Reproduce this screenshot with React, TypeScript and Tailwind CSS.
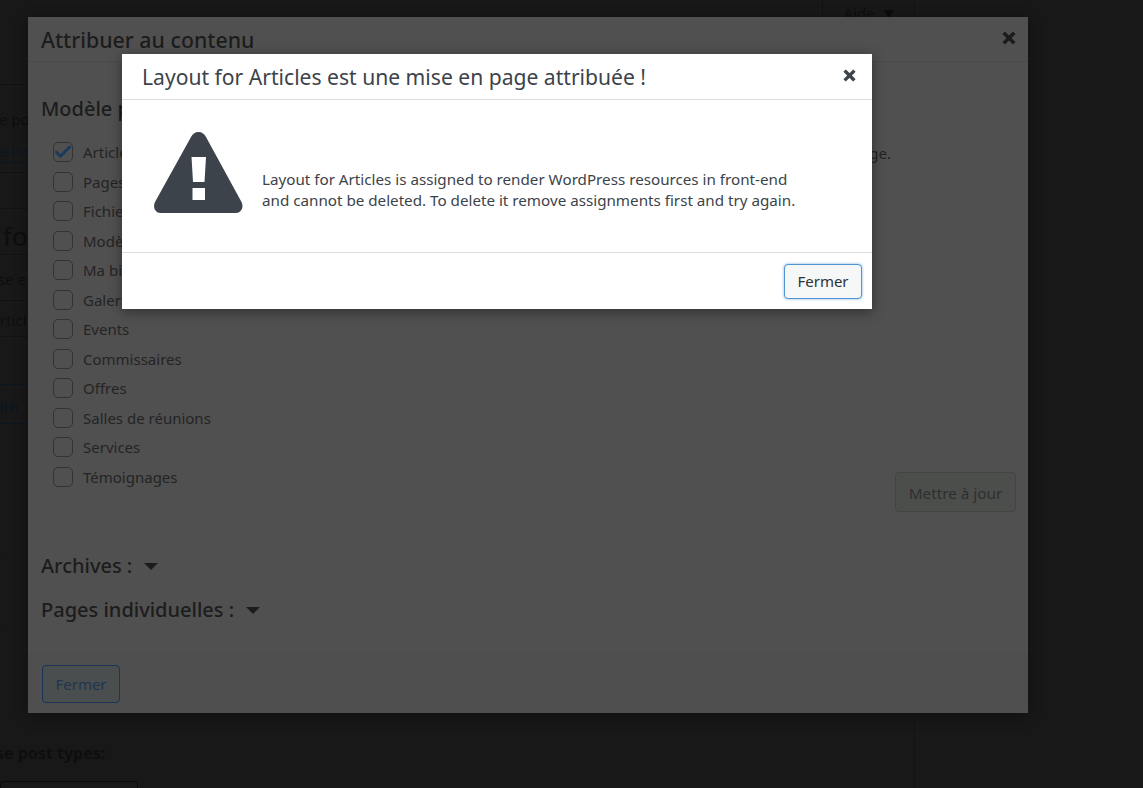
import { Check } from 'lucide-react';

const POST_TYPES = [
  { label: 'Articles', checked: true },
  { label: 'Pages' },
  { label: 'Fichiers média' },
  { label: 'Modèles' },
  { label: 'Ma bibliothèque' },
  { label: 'Galeries' },
  { label: 'Events' },
  { label: 'Commissaires' },
  { label: 'Offres' },
  { label: 'Salles de réunions' },
  { label: 'Services' },
  { label: 'Témoignages' },
];

function Caret() {
  return <span className="ml-3 inline-block h-0 w-0 border-x-[7px] border-t-[7px] border-x-transparent border-t-[#1c1c1c]" />;
}

function CloseIcon({ className }: { className: string }) {
  return (
    <svg viewBox="0 0 14 14" className={className}>
      <path d="M3 3 11 11M11 3 3 11" fill="none" stroke="currentColor" strokeWidth="3.6" strokeLinecap="square" />
    </svg>
  );
}

function PostTypeRow({ label, checked }: { label: string; checked?: boolean }) {
  return (
    <div className="flex h-[29.5px] items-center gap-[10px]">
      <span className="flex h-5 w-5 items-center justify-center rounded-[5px] border border-[#333]">
        {checked && <Check className="h-5 w-5 shrink-0 text-[#1c3a5c]" strokeWidth={3.5} />}
      </span>
      <span className="text-[15px] text-[#242424]">{label}</span>
    </div>
  );
}

function PageBehind() {
  return (
    <div className="flex h-full w-[915px] flex-col whitespace-nowrap border-r border-[#141414] font-['Noto_Sans',sans-serif] text-[15px] text-[#0e0e0e]">
      <div className="flex h-[85px] shrink-0 justify-end border-b border-[#121212]">
        <div className="flex h-6 w-[92px] justify-center gap-[9px] border-l border-[#111] pt-[2px]">
          <span>Aide</span>
          <span className="mt-[8px] h-0 w-0 border-x-[5px] border-t-[8px] border-x-transparent border-t-[#0c0c0c]" />
        </div>
      </div>
      <div className="flex h-[88px] w-7 shrink-0 flex-col gap-[11px] overflow-hidden border-b border-[#121212] pt-6">
        <span className="-ml-[1px] leading-[21px]">e po</span>
        <span className="-ml-[1px] border-b border-[#0a1622] leading-[21px] text-[#0a1622]">e l'ex</span>
      </div>
      <div className="h-9 w-7 shrink-0 border-b border-[#121212]" />
      <div className="flex h-[46px] w-7 shrink-0 items-end overflow-hidden border-b border-[#121212] pl-[3px] text-[26px] leading-9">fo</div>
      <div className="flex h-[46px] w-7 shrink-0 items-center overflow-hidden border-b border-[#121212] pt-1">
        <span className="-ml-[2px]">se e</span>
      </div>
      <div className="flex h-9 w-7 shrink-0 items-center overflow-hidden border-b border-[#121212] pt-1">rticl</div>
      <div className="h-12 w-7 shrink-0 border-b border-[#0d1620]" />
      <div className="flex h-[39px] w-7 shrink-0 items-center overflow-hidden border-b border-[#0d1620] pt-[6px] text-[#0a1622]">lth</div>
      <div className="h-[132px] w-7 shrink-0 border-b border-[#161616]" />
      <div className="h-[70px] w-7 shrink-0 border-b border-[#161616]" />
      <div className="-ml-1 mt-auto text-[16px] font-bold leading-6">se post types:</div>
      <div className="-mb-[13px] mt-[16px] h-5 w-[138px] shrink-0 rounded-[3px] border border-[#0c0c0c]" />
    </div>
  );
}

function AssignDialog() {
  return (
    <div className="absolute left-[28px] top-[17px] flex h-[696px] w-[1000px] flex-col bg-[#505050] font-['Noto_Sans',sans-serif] shadow-[0_3px_12px_rgba(0,0,0,0.35)]">
      <div className="flex h-[45px] shrink-0 items-center justify-between border-b border-[#4a4a4a] pl-[13px] pr-[12px]">
        <h2 className="mt-[2px] text-[21.3px] font-medium text-[#1c1c1c]">Attribuer au contenu</h2>
        <CloseIcon className="-mt-[2px] h-[14px] w-[14px] text-[#1c1c1c]" />
      </div>
      <div className="flex-1 pl-[13px] pr-[12px] pt-[33px]">
        <h3 className="text-[20px] font-medium leading-[28px] text-[#1c1c1c]">Modèle pour :</h3>
        <div className="mt-[14.5px] flex justify-between">
          <div className="pl-3">
            {POST_TYPES.map((t) => (
              <PostTypeRow key={t.label} label={t.label} checked={t.checked} />
            ))}
          </div>
          <div className="flex flex-col items-end">
            <p className="mr-[125px] mt-[5px] text-[15px] leading-[21px] text-[#242424]">ge.</p>
            <button className="mt-[308.5px] h-10 w-[121px] rounded-[4px] border border-[#434343] bg-[#4c4e4c] pt-[2px] text-[15.3px] text-[#2e2e2e]">
              Mettre à jour
            </button>
          </div>
        </div>
        <div className="mt-[40px] flex items-center text-[20px] font-medium leading-7 text-[#1c1c1c]">
          Archives :<Caret />
        </div>
        <div className="mt-4 flex items-center text-[20px] font-medium leading-7 text-[#1c1c1c]">
          Pages individuelles :<Caret />
        </div>
      </div>
      <div className="flex h-[59px] shrink-0 items-center border-t border-[#4c4c4c] bg-[#4f4f4f] pl-[14px]">
        <button className="h-[38px] w-[78px] rounded-[4px] border border-[#1a3555] bg-[#4b4e4f] pt-[1px] text-[15px] text-[#1f3550]">Fermer</button>
      </div>
    </div>
  );
}

function AlertDialog() {
  return (
    <div className="absolute left-[122px] top-[54px] flex h-[255px] w-[750px] flex-col bg-white font-['Noto_Sans',sans-serif] text-[#3c434a] shadow-[0_3px_12px_rgba(0,0,0,0.4)]">
      <div className="flex h-[46px] shrink-0 items-center justify-between border-b border-[#dddddd] pl-5 pr-[16px]">
        <h2 className="text-[21.1px] font-normal">Layout for Articles est une mise en page attribuée !</h2>
        <CloseIcon className="-mt-[3px] h-[13px] w-[13px]" />
      </div>
      <div className="flex flex-1 items-start pl-8 pt-[32px]">
        <svg viewBox="0 0 89 81" className="h-[81px] w-[89px] shrink-0">
          <path
            fillRule="evenodd"
            fill="#3c434a"
            d="M44.500 0c3.500 0 6 2 7.500 5l35.500 65c2.500 5 0 11-5.500 11H6.500C1 81-1.500 75 1 70L37 5c1.500-3 4-5 7.500-5ZM37.500 25l1.500 25h11.500l1.500-25h-14.500Zm1 31v12h12.500V56H38.500Z"
          />
        </svg>
        <p className="ml-[19px] mt-[37px] whitespace-nowrap text-[15.2px] leading-[21px]">
          Layout for Articles is assigned to render WordPress resources in front-end
          <br />
          and cannot be deleted. To delete it remove assignments first and try again.
        </p>
      </div>
      <div className="flex h-[57px] shrink-0 items-center justify-end border-t border-[#dddddd] pr-[10px]">
        <button className="h-[35px] w-[78px] rounded-[4px] border border-[#4f94d4] bg-[#f6f7f7] pt-[1px] text-[15px] text-[#2c3338] shadow-[0_0_3px_rgba(79,148,212,0.7)]">
          Fermer
        </button>
      </div>
    </div>
  );
}

export default function App() {
  return (
    <div className="relative h-[788px] w-[1143px] overflow-hidden bg-[#181818]">
      <PageBehind />
      <AssignDialog />
      <AlertDialog />
    </div>
  );
}
